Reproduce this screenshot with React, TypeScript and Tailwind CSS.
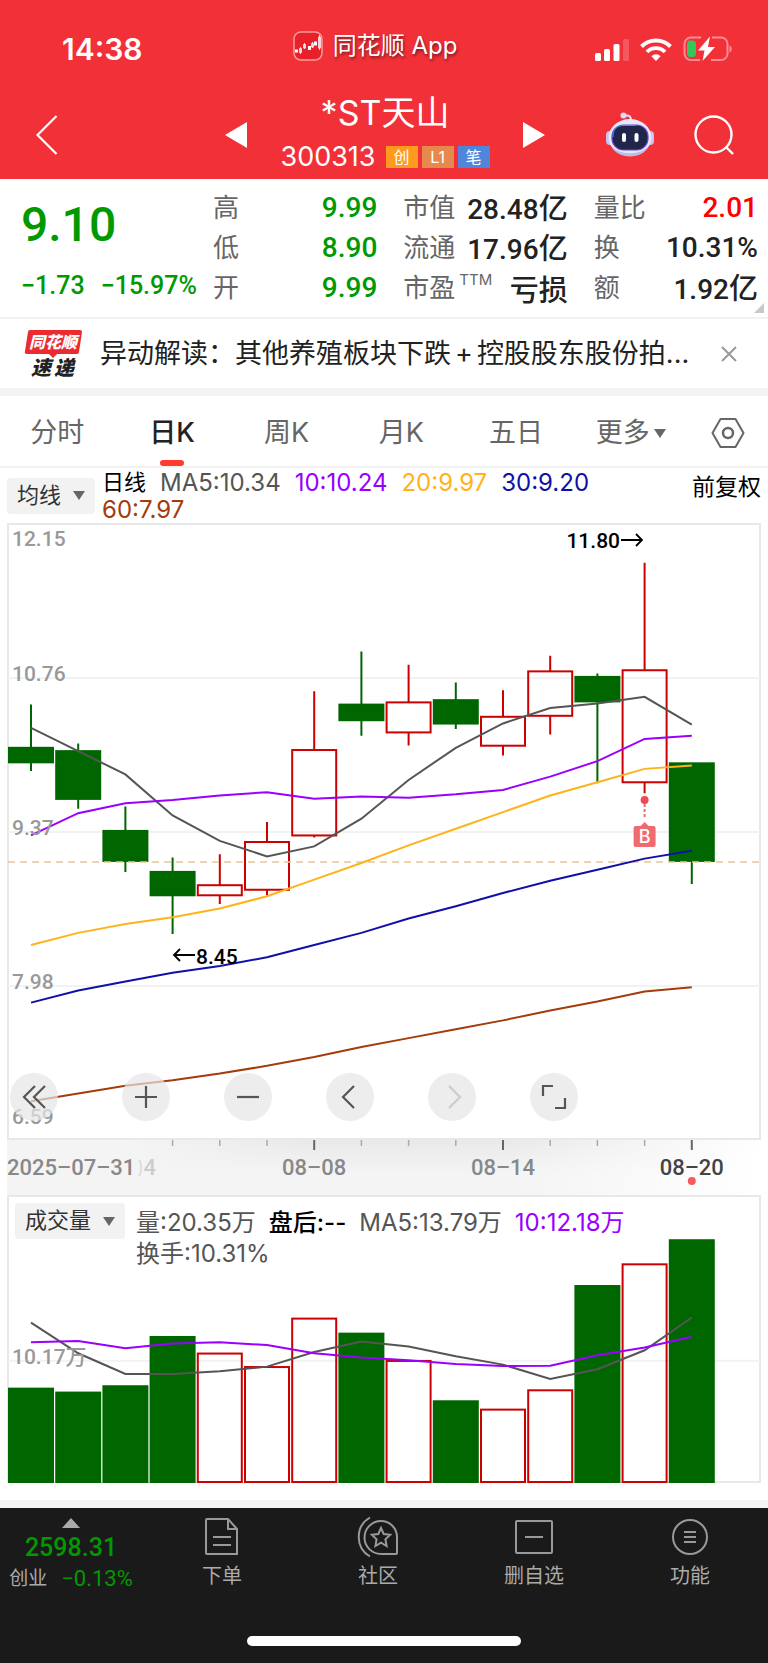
import type { ReactNode } from 'react'

type Candle = { open: number; close: number; high: number; low: number; volume: number }

const CANDLES: Candle[] = [
  { open: 10.13, close: 9.99, high: 10.52, low: 9.92, volume: 7.91 },
  { open: 10.1, close: 9.66, high: 10.17, low: 9.58, volume: 7.58 },
  { open: 9.38, close: 9.1, high: 9.6, low: 9.01, volume: 8.11 },
  { open: 9.01, close: 8.79, high: 9.14, low: 8.45, volume: 12.24 },
  { open: 8.79, close: 8.89, high: 9.17, low: 8.72, volume: 10.85 },
  { open: 8.84, close: 9.28, high: 9.46, low: 8.8, volume: 9.72 },
  { open: 9.33, close: 10.11, high: 10.64, low: 9.32, volume: 13.78 },
  { open: 10.52, close: 10.37, high: 11.0, low: 10.24, volume: 12.52 },
  { open: 10.26, close: 10.54, high: 10.88, low: 10.15, volume: 10.23 },
  { open: 10.56, close: 10.34, high: 10.72, low: 10.3, volume: 6.85 },
  { open: 10.14, close: 10.41, high: 10.65, low: 10.06, volume: 6.15 },
  { open: 10.41, close: 10.82, high: 10.96, low: 10.25, volume: 7.77 },
  { open: 10.77, close: 10.54, high: 10.8, low: 9.81, volume: 16.51 },
  { open: 9.81, close: 10.83, high: 11.8, low: 9.72, volume: 18.33 },
  { open: 9.99, close: 9.1, high: 9.99, low: 8.9, volume: 20.35 },
]

const PRICE_LINES = [
  { color: '#555555', values: [10.31, 10.1, 9.89, 9.52, 9.29, 9.15, 9.24, 9.49, 9.84, 10.13, 10.35, 10.49, 10.53, 10.59, 10.34] },
  { color: '#9900ff', values: [9.34, 9.54, 9.63, 9.66, 9.7, 9.73, 9.67, 9.69, 9.68, 9.71, 9.75, 9.87, 10.01, 10.21, 10.24] },
  { color: '#ffb31a', values: [8.35, 8.46, 8.54, 8.6, 8.68, 8.79, 8.94, 9.09, 9.25, 9.4, 9.55, 9.7, 9.82, 9.94, 9.97] },
  { color: '#1010a8', values: [7.83, 7.94, 8.02, 8.1, 8.16, 8.24, 8.35, 8.46, 8.59, 8.7, 8.82, 8.93, 9.03, 9.13, 9.2] },
  { color: '#a33c0a', values: [6.94, 7.01, 7.08, 7.13, 7.19, 7.26, 7.34, 7.43, 7.51, 7.59, 7.67, 7.76, 7.84, 7.93, 7.97] },
]

const VOLUME_LINES = [
  { color: '#555555', values: [13.36, 10.79, 9.05, 9.05, 9.28, 9.67, 10.9, 11.77, 11.35, 10.54, 9.84, 8.63, 9.45, 11.04, 13.79] },
  { color: '#9900ff', values: [11.71, 11.82, 11.21, 11.6, 11.71, 11.48, 10.79, 10.43, 10.2, 9.89, 9.72, 9.75, 10.62, 11.27, 12.18] },
]

const UP = '#cc0000'
const DOWN = '#006600'
const CHART_W = 754
const PRICE_H = 617
const VOLUME_H = 288

const colX = (i: number) => 24 + i * 47.2
const priceY = (p: number) => (12.15 - p) * 110.8 + 1
const volumeY = (v: number) => VOLUME_H - 1 - v * 11.93

const toPoints = (values: number[], y: (v: number) => number) =>
  values.map((v, i) => `${colX(i)},${y(v)}`).join(' ')

const DIN = "font-[Roboto,'Noto_Sans_CJK_SC',sans-serif]"

function StatusBar() {
  return (
    <div className="grid grid-cols-[1fr_auto_1fr] items-center h-[92px]">
      <div className="pl-[62px] pt-[6px] text-[30px] leading-9 font-semibold">14:38</div>
      <div className="flex items-center gap-[10px] pr-[18px]">
        <svg width="30" height="30" viewBox="0 0 30 30">
          <rect x="1" y="1" width="28" height="28" rx="7" fill="#e8202a" stroke="#ff9a9a" strokeWidth="1.5" />
          <path d="M2 18.500h3v3h-3zM15 15h3v4h-3zM21 10.500h3v4h-3z" fill="#fff" />
          <path d="M6.500 17.500h2v4h-2zM10.500 13.500h2v3.500h-2zM18.500 12.500h2v3.500h-2zM25.500 6h2v11h-2zM7.500 16v7M11.500 12v6M19.500 11v6M26.500 4v15" fill="none" stroke="#fff" strokeWidth="0.8" />
        </svg>
        <span className="text-2xl [text-shadow:1px_2px_3px_rgba(0,0,0,0.5)]">同花顺 App</span>
      </div>
      <div className="flex items-center justify-end gap-[11px] pr-9 pt-[6px]">
        <svg width="34" height="23" viewBox="0 0 34 23" fill="#fff">
          <rect x="0" y="15" width="6" height="8" rx="1.500" />
          <rect x="9" y="11" width="6" height="12" rx="1.500" />
          <rect x="18.500" y="6" width="6" height="17" rx="1.500" />
          <rect x="28" y="1" width="6" height="22" rx="1.500" opacity="0.2" />
        </svg>
        <svg width="32" height="23" viewBox="0 0 32 23" fill="none" stroke="#fff" strokeWidth="4">
          <path d="M1.500 8.500a20.500 20.500 0 0 1 29 0" />
          <path d="M7 14a12.500 12.500 0 0 1 18 0" strokeWidth="3.800" />
          <path d="M16 23l-4.600-4.800a6.500 6.500 0 0 1 9.200 0z" fill="#fff" stroke="none" />
        </svg>
        <svg width="49" height="26" viewBox="0 0 49 26">
          <path d="M18 1.500H8a6.500 6.500 0 0 0-6.500 6.500v9.500A6.500 6.500 0 0 0 8 24h9M28 24h10a6.500 6.500 0 0 0 6.500-6.500V8A6.500 6.500 0 0 0 38 1.500h-9" fill="none" stroke="#f98d92" strokeWidth="2" />
          <path d="M46.500 9.500v7c1.500-.5 2.200-1.800 2.200-3.500s-.7-3-2.200-3.500z" fill="#f98d92" />
          <rect x="4" y="4.500" width="9" height="16.500" rx="3.500" fill="#34c759" />
          <path d="M27 0.500L15 14.500h6.500L19.500 25 32 11h-7z" fill="#fff" />
        </svg>
      </div>
    </div>
  )
}

function Robot() {
  return (
    <svg width="48" height="45" viewBox="0 0 48 45">
      <path d="M17 4.500c5-2 8-1 8 4" fill="none" stroke="#e6e2f5" strokeWidth="2" />
      <circle cx="17.500" cy="3.500" r="3" fill="#dcdcf2" />
      <rect x="0" y="19" width="8" height="14" rx="4" fill="#c9c4ec" />
      <rect x="40" y="19" width="8" height="14" rx="4" fill="#c9c4ec" />
      <ellipse cx="24" cy="25.500" rx="21.500" ry="18.500" fill="#e9e8f8" />
      <path d="M5 33c6 11 32 11 38 0-3 8-11 11.500-19 11.500S8 41 5 33z" fill="#bcbce6" />
      <rect x="6" y="13" width="36" height="25" rx="11.500" fill="#20264a" stroke="#6b49d8" strokeWidth="1.200" />
      <path d="M7 25c0-8 4-11.500 11-11.500h12" fill="none" stroke="#3f8fe0" strokeWidth="1" />
      <rect x="16" y="21" width="4" height="9" rx="2" fill="#fff" />
      <rect x="28.500" y="21" width="4" height="9" rx="2" fill="#fff" />
    </svg>
  )
}

function NavBar() {
  return (
    <div className="flex items-center h-[87px] pb-[2px] pl-9 pr-[34px]">
      <div className="flex-1">
        <button aria-label="返回" className="block">
          <svg width="22" height="40" viewBox="0 0 22 40" fill="none" stroke="#fff" strokeWidth="2.200">
            <path d="M20.500 1L1.500 20l19 19" />
          </svg>
        </button>
      </div>
      <div className="flex items-center justify-between w-[320px]">
        <button aria-label="上一只">
          <svg width="22" height="26" viewBox="0 0 22 26" fill="#fff"><path d="M0 13L22 0v26z" /></svg>
        </button>
        <div className="flex flex-col items-center gap-1">
          <h1 className="text-[34px] leading-10">*ST天山</h1>
          <div className="flex items-center gap-1 h-10">
            <span className="text-[27px] leading-8 mr-[6px]">300313</span>
            <span className="w-8 h-[22px] bg-[#ff9a1f] text-base leading-[22px] text-center">创</span>
            <span className="w-8 h-[22px] bg-[#e58a4c] text-base leading-[22px] text-center">L1</span>
            <span className="w-8 h-[22px] bg-[#4f86dc] text-base leading-[22px] text-center">笔</span>
          </div>
        </div>
        <button aria-label="下一只">
          <svg width="22" height="26" viewBox="0 0 22 26" fill="#fff"><path d="M22 13L0 0v26z" /></svg>
        </button>
      </div>
      <div className="flex-1 flex items-center justify-end gap-10">
        <button aria-label="智能助手"><Robot /></button>
        <button aria-label="搜索">
          <svg width="40" height="40" viewBox="0 0 40 40" fill="none" stroke="#fff" strokeWidth="2.400">
            <circle cx="19.500" cy="19.500" r="18" />
            <path d="M32 32l7 7" />
          </svg>
        </button>
      </div>
    </div>
  )
}

type StatProps = { label: ReactNode; value: string; unit?: string; color?: string }

function Stat({ label, value, unit, color = 'text-[#222]' }: StatProps) {
  return (
    <div className="flex items-center justify-between h-10">
      <dt className="text-[26px] text-[#666]">{label}</dt>
      <dd className={`${DIN} flex items-baseline text-[28px] font-medium ${color}`}>
        {value}
        {unit && <span className="font-['Noto_Sans_CJK_SC',sans-serif] text-[29px] leading-10 font-medium">{unit}</span>}
      </dd>
    </div>
  )
}

function Quote() {
  return (
    <section className="relative flex h-[140px] pt-[9px] pl-[21px] pr-[10px] border-b-2 border-[#f2f2f2]">
      <div className={`${DIN} w-[192px] text-[#009900] whitespace-nowrap`}>
        <div className="text-[48px] leading-[74px] font-medium">9.10</div>
        <div className="flex gap-4 mt-1 text-[25px] leading-10 font-medium">
          <span>−1.73</span>
          <span>−15.97%</span>
        </div>
      </div>
      <div className="flex-1 grid grid-cols-3 gap-x-[26px] leading-10">
        <dl>
          <Stat label="高" value="9.99" color="text-[#009900]" />
          <Stat label="低" value="8.90" color="text-[#009900]" />
          <Stat label="开" value="9.99" color="text-[#009900]" />
        </dl>
        <dl>
          <Stat label="市值" value="28.48" unit="亿" />
          <Stat label="流通" value="17.96" unit="亿" />
          <Stat label={<>市盈<sup className="ml-1 text-[15px] -top-3">TTM</sup></>} value="" unit="亏损" />
        </dl>
        <dl>
          <Stat label="量比" value="2.01" color="text-[#ff0000]" />
          <Stat label="换" value="10.31%" />
          <Stat label="额" value="1.92" unit="亿" />
        </dl>
      </div>
      <svg className="absolute right-1 bottom-1" width="10" height="10" viewBox="0 0 10 10" fill="#c8c8c8">
        <path d="M10 0v10H0z" />
      </svg>
    </section>
  )
}

function NewsBar() {
  return (
    <section className="flex items-center h-[77px] pl-6 pr-[30px] border-b-8 border-[#f4f4f4]">
      <svg className="shrink-0" width="60" height="52" viewBox="0 0 60 52" fontFamily="'Noto Sans CJK SC', sans-serif" fontWeight="900" fontStyle="italic">
        <path d="M6 2h50q2 0 2 2l-3 20q0 2-2 2H33l-4 4-4-4H3q-3 0-2-3L4 4q0-2 2-2z" fill="#ea2b32" />
        <text x="29" y="20" fontSize="16" textAnchor="middle" fill="#fff">同花顺</text>
        <text x="7" y="47" fontSize="20" fill="#222">速</text>
        <text x="30" y="47" fontSize="20" fill="#222">递</text>
      </svg>
      <a href="#news" className="flex-1 ml-4 text-[27px] leading-10 text-[#222] whitespace-nowrap">
        异动解读：其他养殖板块下跌<span className="mx-1">+</span>控股股东股份拍...
      </a>
      <button aria-label="关闭">
        <svg width="18" height="18" viewBox="0 0 18 18" stroke="#999" strokeWidth="2"><path d="M2 2l14 14M16 2L2 16" /></svg>
      </button>
    </section>
  )
}

function Tabs() {
  const tabs = ['分时', '日K', '周K', '月K', '五日', '更多']
  return (
    <nav className="flex h-[72px] border-b-2 border-[#f2f2f2] text-[27px] text-[#666]">
      {tabs.map((tab) => {
        const active = tab === '日K'
        return (
          <button key={tab} className={`relative flex-1 flex items-center justify-center gap-1 pt-1 ${active ? 'font-medium text-[#222]' : ''}`}>
            {tab}
            {tab === '更多' && (
              <svg width="12" height="9" viewBox="0 0 12 9" fill="#666"><path d="M0 0h12L6 9z" /></svg>
            )}
            {active && <span className="absolute bottom-0 left-1/2 -translate-x-1/2 w-6 h-[6px] rounded-full bg-[#ff3b30]" />}
          </button>
        )
      })}
      <button aria-label="设置" className="w-20 flex items-center justify-center pt-1">
        <svg width="34" height="32" viewBox="0 0 34 32" fill="none" stroke="#666" strokeWidth="2">
          <path d="M9.500 2h15L32.500 16l-8 14h-15L1.500 16z" strokeLinejoin="round" />
          <circle cx="17" cy="16" r="5" strokeWidth="2.500" />
        </svg>
      </button>
    </nav>
  )
}

function Picker({ label }: { label: string }) {
  return (
    <button className="shrink-0 flex items-center gap-3 h-9 px-[10px] rounded-sm bg-[#f2f2f2] text-[22px] text-[#333]">
      {label}
      <svg width="12" height="9" viewBox="0 0 12 9" fill="#666"><path d="M0 0h12L6 9z" /></svg>
    </button>
  )
}

function PriceLegend() {
  return (
    <div className="flex items-center h-[55px] px-[7px] text-2xl leading-[27px]">
      <Picker label="均线" />
      <div className="flex-1 flex flex-wrap gap-x-[14px] ml-[7px] leading-[27px]">
        <span className="text-[22px] leading-[27px] text-black">日线</span>
        <span className="text-[#555]">MA5:10.34</span>
        <span className="text-[#9900ff]">10:10.24</span>
        <span className="text-[#ffb31a]">20:9.97</span>
        <span className="text-[#1010a8]">30:9.20</span>
        <span className="w-full text-[#a33c0a]">60:7.97</span>
      </div>
      <div className="text-[23px] text-black pb-4">前复权</div>
    </div>
  )
}

function RoundButton({ label, className = '', children }: { label: string; className?: string; children: ReactNode }) {
  return (
    <button aria-label={label} className={`w-12 h-12 rounded-full bg-[#e6e6e6]/70 flex items-center justify-center ${className}`}>
      <svg width="26" height="26" viewBox="0 0 26 26" fill="none" stroke="currentColor" strokeWidth="2.200">
        {children}
      </svg>
    </button>
  )
}

function PriceChart() {
  return (
    <div className="relative">
      <svg viewBox={`0 0 ${CHART_W} ${PRICE_H}`} className={`block w-full ${DIN}`}>
        <rect x="1" y="1" width={CHART_W - 2} height={PRICE_H - 2} fill="none" stroke="#e8e8e8" strokeWidth="2" />
        {[10.76, 9.37, 7.98].map((p) => (
          <path key={p} d={`M1 ${priceY(p)}H753`} stroke="#f2f2f2" strokeWidth="2" />
        ))}
        {CANDLES.map((c, i) => {
          const up = c.close > c.open
          const top = priceY(Math.max(c.open, c.close))
          const bottom = priceY(Math.min(c.open, c.close)) - 1
          const x = colX(i)
          return (
            <g key={i} stroke={up ? UP : DOWN} strokeWidth="2">
              <path d={`M${x} ${priceY(c.high)}V${top}M${x} ${bottom}V${priceY(c.low)}`} />
              <rect x={x - 22} y={top} width="44" height={bottom - top} fill={up ? 'none' : DOWN} />
            </g>
          )
        })}
        <path d={`M1 ${priceY(9.1)}H753`} stroke="#e8c79c" strokeWidth="1.500" strokeDasharray="7 5" />
        {PRICE_LINES.map((line) => (
          <polyline key={line.color} points={toPoints(line.values, priceY)} fill="none" stroke={line.color} strokeWidth="2" />
        ))}
        <g fill="#999" fontSize="21" fontWeight="500">
          <text x="5" y="23">12.15</text>
          <text x="5" y="158">10.76</text>
          <text x="5" y="312">9.37</text>
          <text x="5" y="466">7.98</text>
          <text x="5" y="601">6.59</text>
        </g>
        <g fill="#000" fontSize="21" fontWeight="500">
          <text x="613" y="25" textAnchor="end">11.80</text>
          <text x="189" y="441">8.45</text>
        </g>
        <path d="M614 17h21M629 11l6 6-6 6M188 432h-21M173 426l-6 6 6 6" fill="none" stroke="#000" strokeWidth="1.800" />
        {/* buy marker */}
        <circle cx={colX(13)} cy="277" r="4" fill="#ee4a52" />
        <path d={`M${colX(13)} 281v14`} stroke="#f06b70" strokeWidth="2" strokeDasharray="3 2" />
        <path d={`M${colX(13)} 299l4 4h-8z`} fill="#f06b70" />
        <rect x={colX(13) - 11} y="303" width="22" height="21" rx="2" fill="#f06b70" />
        <text x={colX(13)} y="320" textAnchor="middle" fontSize="18" fontWeight="500" fill="#fff" className="font-[Inter,sans-serif]">B</text>
      </svg>
      <div className="absolute left-[3px] bottom-[19px] flex gap-[54px] text-[#555]">
        <RoundButton label="快退" className="mr-[10px]">
          <path d="M14 2L3 13l11 11M24 2L13 13l11 11" />
        </RoundButton>
        <RoundButton label="放大"><path d="M13 2v22M2 13h22" /></RoundButton>
        <RoundButton label="缩小"><path d="M2 13h22" /></RoundButton>
        <RoundButton label="左移"><path d="M17 2L6 13l11 11" /></RoundButton>
        <RoundButton label="右移" className="text-[#ccc]"><path d="M10 2l11 11-11 11" /></RoundButton>
        <RoundButton label="全屏"><path d="M12 2H2v10M24 14v10H14" /></RoundButton>
      </div>
    </div>
  )
}

function DateAxis() {
  return (
    <svg viewBox="0 0 754 55" className={`block w-full ${DIN}`}>
      <defs>
        <linearGradient id="shade" x1="0" y1="0" x2="0" y2="1">
          <stop offset="0" stopColor="#e9e9e9" />
          <stop offset="0.6" stopColor="#f4f4f4" />
        </linearGradient>
        <linearGradient id="left" x1="0" x2="1">
          <stop offset="0.4" stopColor="#f4f4f4" />
          <stop offset="1" stopColor="#f4f4f4" stopOpacity="0" />
        </linearGradient>
        <linearGradient id="right" x1="0" x2="1">
          <stop offset="0" stopColor="#fff" stopOpacity="0" />
          <stop offset="1" stopColor="#fff" />
        </linearGradient>
      </defs>
      <rect width="754" height="55" fill="url(#shade)" />
      <rect width="300" height="55" fill="url(#left)" />
      <rect x="500" width="254" height="55" fill="url(#right)" />
      {CANDLES.map((_, i) => {
        if (i < 3) return null
        const major = i % 4 === 2
        return <path key={i} d={`M${colX(i)} 0v${major ? 10 : 6}`} stroke={major ? '#666' : '#aaa'} strokeWidth={major ? 2 : 1.5} />
      })}
      <g fontSize="22" fontWeight="500" fill="#888">
        {/* tail of the date that scrolls under the first label */}
        <text x="149" y="35" textAnchor="end" fill="#ccc">4</text>
        <path d="M132 20c3 4 3 12 0 16" fill="none" stroke="#ddd" strokeWidth="2" />
        <text x="0" y="35">2025–07–31</text>
        <text x={colX(6)} y="35" textAnchor="middle">08–08</text>
        <text x={colX(10)} y="35" textAnchor="middle">08–14</text>
        <text x={colX(14)} y="35" textAnchor="middle" fill="#444">08–20</text>
      </g>
      <circle cx={colX(14)} cy="41" r="4" fill="#f55a5f" />
    </svg>
  )
}

function VolumeChart() {
  return (
    <div className="relative">
      <svg viewBox={`0 0 ${CHART_W} ${VOLUME_H}`} className={`block w-full ${DIN}`}>
        <rect x="1" y="1" width={CHART_W - 2} height={VOLUME_H - 2} fill="none" stroke="#e8e8e8" strokeWidth="2" />
        <path d={`M1 ${volumeY(10.17)}H753`} stroke="#f2f2f2" strokeWidth="2" />
        {CANDLES.map((c, i) => {
          const up = c.close > c.open
          return (
            <rect
              key={i}
              x={colX(i) - 22}
              y={volumeY(c.volume) + 1}
              width="44"
              height={c.volume * 11.93 - 1}
              fill={up ? 'none' : DOWN}
              stroke={up ? UP : DOWN}
              strokeWidth="2"
            />
          )
        })}
        {VOLUME_LINES.map((line) => (
          <polyline key={line.color} points={toPoints(line.values, volumeY)} fill="none" stroke={line.color} strokeWidth="2" />
        ))}
        <text x="5" y="169" fontSize="21" fontWeight="500" fill="#999">10.17万</text>
      </svg>
      <div className="absolute left-2 top-2 flex items-start text-2xl">
        <Picker label="成交量" />
        <div className="ml-[11px] pt-1 leading-[31px]">
          <div className="flex gap-x-[13px] text-[#555]">
            <span>量:20.35万</span>
            <span className="text-black font-medium">盘后:--</span>
            <span>MA5:13.79万</span>
            <span className="text-[#9900ff]">10:12.18万</span>
          </div>
          <div className="text-[#555]">换手:10.31%</div>
        </div>
      </div>
    </div>
  )
}

function BottomItem({ label, children }: { label: string; children: ReactNode }) {
  return (
    <button className="flex-1 flex flex-col items-center gap-1 pt-2 text-[#aaa]">
      <svg width="42" height="42" viewBox="0 0 42 42" fill="none" stroke="#999" strokeWidth="2">{children}</svg>
      <span className="text-xl leading-7">{label}</span>
    </button>
  )
}

function BottomBar() {
  return (
    <footer className="h-[155px] bg-[#1a1a1a] flex flex-col justify-between">
      <div className="flex items-start">
        <button className={`w-36 pr-[2px] pt-[10px] flex flex-col items-center text-[#009900] ${DIN}`}>
          <svg width="18" height="10" viewBox="0 0 18 10" fill="#aaa"><path d="M9 0l9 10H0z" /></svg>
          <span className="mt-1 text-[25px] leading-8 font-medium">2598.31</span>
          <span className="flex items-center gap-[14px] text-[22px] leading-[30px]">
            <span className="text-[19px] text-[#aaa]">创业</span>
            −0.13%
          </span>
        </button>
        <BottomItem label="下单">
          <path d="M6 3h21l9 10v25H6a1 1 0 0 1-1-1V4a1 1 0 0 1 1-1zM27 3v10h9M12 21h18M12 29h18" />
        </BottomItem>
        <BottomItem label="社区">
          <path d="M24 5a16.500 16.500 0 0 0 0 33h15a1 1 0 0 0 1-1V21A16 16 0 0 0 24 5z" />
          <path d="M13 1.500a22.500 22.500 0 0 0 0 39" />
          <path d="M24 12l2.700 6 6.500.8-4.800 4.500 1.200 6.700-5.600-3.300-5.600 3.300 1.200-6.700-4.800-4.500 6.500-.8z" />
        </BottomItem>
        <BottomItem label="删自选">
          <rect x="3" y="5" width="36" height="32" rx="1" />
          <path d="M12 21h18" />
        </BottomItem>
        <BottomItem label="功能">
          <circle cx="21" cy="21" r="17" />
          <path d="M15 16h12M15 21h12M15 26h12" />
        </BottomItem>
      </div>
      <div className="mx-auto mb-[17px] w-[274px] h-[10px] rounded-full bg-white" />
    </footer>
  )
}

export default function App() {
  return (
    <div className="bg-white font-[Inter,'Noto_Sans_CJK_SC',sans-serif]">
      <header className="bg-[#f23038] text-white">
        <StatusBar />
        <NavBar />
      </header>
      <Quote />
      <NewsBar />
      <Tabs />
      <main>
        <PriceLegend />
        <div className="px-[7px]">
          <PriceChart />
          <DateAxis />
          <VolumeChart />
        </div>
        <div className="mt-[17px] h-2 bg-[#f4f4f4]" />
      </main>
      <BottomBar />
    </div>
  )
}
